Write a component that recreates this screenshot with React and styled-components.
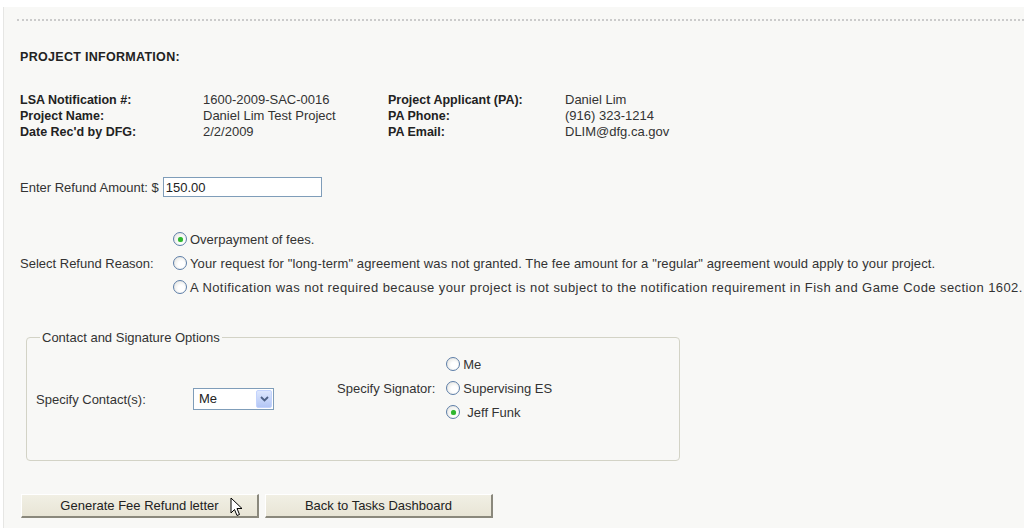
import React from "react";
import styled, { createGlobalStyle } from "styled-components";

const GlobalStyle = createGlobalStyle`
  html, body {
    margin: 0;
    padding: 0;
    background: #ffffff;
  }
  body {
    font-family: "Liberation Sans", Arial, sans-serif;
    font-size: 13px;
    color: #333333;
  }
`;

const Page = styled.div`
  margin: 7px 0 0 3px;
  min-height: 521px;
  background: #f8f8f6;
  border-left: 1px solid #e6e6e4;
  padding-top: 12px;
  box-sizing: border-box;
`;

const Divider = styled.div`
  margin-left: 13px;
  border-top: 2px dotted #cbcbcb;
  height: 0;
`;

const Content = styled.div`
  padding-left: 16px;
`;

const Heading = styled.h2`
  margin: 28px 0 0;
  font-size: 12.5px;
  font-weight: bold;
  line-height: 16px;
  letter-spacing: 0.3px;
  color: #222;
`;

const InfoGrid = styled.div`
  display: grid;
  grid-template-columns: 183px 185px 177px auto;
  grid-auto-rows: 16px;
  line-height: 16px;
  margin-top: 27px;
`;

const InfoLabel = styled.div`
  font-weight: bold;
  font-size: 12.5px;
  color: #222;
`;

const InfoValue = styled.div`
  color: #333;
`;

const AmountRow = styled.div`
  display: flex;
  align-items: center;
  margin-top: 37px;
  height: 20px;
`;

const AmountLabel = styled.span`
  margin-right: 4px;
`;

const TextInput = styled.input`
  width: 159px;
  height: 20px;
  box-sizing: border-box;
  border: 1px solid #7f9db9;
  background: #ffffff;
  font-family: inherit;
  font-size: 13px;
  color: #222;
  padding: 0 2px;
  outline: none;
`;

const ReasonRow = styled.div`
  display: flex;
  align-items: center;
  margin-top: 30px;
`;

const ReasonLabel = styled.div`
  width: 153px;
`;

const RadioList = styled.div`
  display: flex;
  flex-direction: column;
`;

const RadioRow = styled.label`
  display: flex;
  align-items: center;
  height: 24px;
  gap: ${(p) => p.$gap || 3}px;
  letter-spacing: ${(p) => p.$spacing || 0}px;
  white-space: nowrap;
`;

const RadioCircle = styled.span`
  width: 14px;
  height: 14px;
  box-sizing: border-box;
  border-radius: 50%;
  border: 1px solid #5d7ea8;
  background: radial-gradient(circle at 60% 60%, #ffffff 30%, #dcdcd6 100%);
  display: inline-flex;
  align-items: center;
  justify-content: center;
  flex-shrink: 0;

  &::after {
    content: "";
    width: 5px;
    height: 5px;
    border-radius: 50%;
    background: ${(p) => (p.$checked ? "#2fb62f" : "transparent")};
    box-shadow: ${(p) => (p.$checked ? "0 0 1px #6fd86f" : "none")};
  }
`;

const Fieldset = styled.fieldset`
  margin: 31px 0 0 6px;
  width: 654px;
  height: 131px;
  box-sizing: border-box;
  border: 1px solid #d3d3c6;
  border-radius: 4px;
  padding: 7px 0 0 9px;
`;

const Legend = styled.legend`
  margin-left: 4px;
  padding: 0 2px;
  color: #333;
`;

const OptionsRow = styled.div`
  display: flex;
  align-items: flex-start;
`;

const ContactBlock = styled.div`
  display: flex;
  align-items: center;
  margin-top: 36px;
`;

const ContactLabel = styled.div`
  width: 157px;
`;

const SelectBox = styled.div`
  width: 81px;
  height: 22px;
  box-sizing: border-box;
  border: 1px solid #7f9db9;
  background: #ffffff;
  display: flex;
  align-items: stretch;
`;

const SelectText = styled.span`
  flex: 1;
  padding-left: 5px;
  line-height: 20px;
  color: #222;
`;

const SelectArrow = styled.span`
  width: 16px;
  margin: 1px;
  border-radius: 2px;
  background: linear-gradient(#dde7fd, #b3c6f5);
  border: 1px solid #c3d3fd;
  box-sizing: border-box;
  display: flex;
  align-items: center;
  justify-content: center;
`;

const SignatorBlock = styled.div`
  display: flex;
  align-items: center;
  margin-left: 63px;
`;

const SignatorLabel = styled.div`
  margin-right: 11px;
`;

const ButtonRow = styled.div`
  display: flex;
  gap: 6px;
  margin: 33px 0 0 1px;
`;

const Button = styled.button`
  position: relative;
  width: ${(p) => p.$w}px;
  height: 24px;
  box-sizing: border-box;
  font-family: inherit;
  font-size: 13px;
  color: #222;
  background: linear-gradient(#f1efe4, #e8e5d6);
  border-top: 1px solid #ffffff;
  border-left: 1px solid #ffffff;
  border-right: 2px solid #8a887c;
  border-bottom: 2px solid #8a887c;
  padding: 0;
  cursor: default;
`;

const Cursor = styled.svg`
  position: absolute;
  left: 208px;
  top: 2px;
`;

const info = [
  ["LSA Notification #:", "1600-2009-SAC-0016", "Project Applicant (PA):", "Daniel Lim"],
  ["Project Name:", "Daniel Lim Test Project", "PA Phone:", "(916) 323-1214"],
  ["Date Rec'd by DFG:", "2/2/2009", "PA Email:", "DLIM@dfg.ca.gov"],
];

const reasons = [
  { text: "Overpayment of fees.", checked: true },
  {
    text: 'Your request for "long-term" agreement was not granted. The fee amount for a "regular" agreement would apply to your project.',
    spacing: 0.12,
  },
  {
    text: "A Notification was not required because your project is not subject to the notification requirement in Fish and Game Code section 1602.",
    spacing: 0.42,
  },
];

const signators = [
  { text: "Me" },
  { text: "Supervising ES" },
  { text: "Jeff Funk", checked: true, gap: 7 },
];

const App = () => {
  return (
    <>
      <GlobalStyle />
      <Page>
        <Divider />
        <Content>
          <Heading>PROJECT INFORMATION:</Heading>
          <InfoGrid>
            {info.map((row) => (
              <React.Fragment key={row[0]}>
                <InfoLabel>{row[0]}</InfoLabel>
                <InfoValue>{row[1]}</InfoValue>
                <InfoLabel>{row[2]}</InfoLabel>
                <InfoValue>{row[3]}</InfoValue>
              </React.Fragment>
            ))}
          </InfoGrid>

          <AmountRow>
            <AmountLabel>Enter Refund Amount: $</AmountLabel>
            <TextInput defaultValue="150.00" />
          </AmountRow>

          <ReasonRow>
            <ReasonLabel>Select Refund Reason:</ReasonLabel>
            <RadioList>
              {reasons.map((r) => (
                <RadioRow key={r.text} $spacing={r.spacing}>
                  <RadioCircle $checked={r.checked} />
                  {r.text}
                </RadioRow>
              ))}
            </RadioList>
          </ReasonRow>

          <Fieldset>
            <Legend>Contact and Signature Options</Legend>
            <OptionsRow>
              <ContactBlock>
                <ContactLabel>Specify Contact(s):</ContactLabel>
                <SelectBox>
                  <SelectText>Me</SelectText>
                  <SelectArrow>
                    <svg width="9" height="6" viewBox="0 0 9 6">
                      <path d="M1 1 L4.5 4.5 L8 1" fill="none" stroke="#4d6185" strokeWidth="1.8" />
                    </svg>
                  </SelectArrow>
                </SelectBox>
              </ContactBlock>
              <SignatorBlock>
                <SignatorLabel>Specify Signator:</SignatorLabel>
                <RadioList>
                  {signators.map((s) => (
                    <RadioRow key={s.text} $gap={s.gap}>
                      <RadioCircle $checked={s.checked} />
                      {s.text}
                    </RadioRow>
                  ))}
                </RadioList>
              </SignatorBlock>
            </OptionsRow>
          </Fieldset>

          <ButtonRow>
            <Button $w={238}>
              Generate Fee Refund letter
              <Cursor width="13" height="21" viewBox="0 0 13 21">
                <path
                  d="M1 1 L1 16 L4.5 12.5 L7 18.5 L9.5 17.5 L7 11.5 L12 11.5 Z"
                  fill="#ffffff"
                  stroke="#000000"
                  strokeWidth="1"
                  strokeLinejoin="miter"
                />
              </Cursor>
            </Button>
            <Button $w={228}>Back to Tasks Dashboard</Button>
          </ButtonRow>
        </Content>
      </Page>
    </>
  );
};

export default App;
